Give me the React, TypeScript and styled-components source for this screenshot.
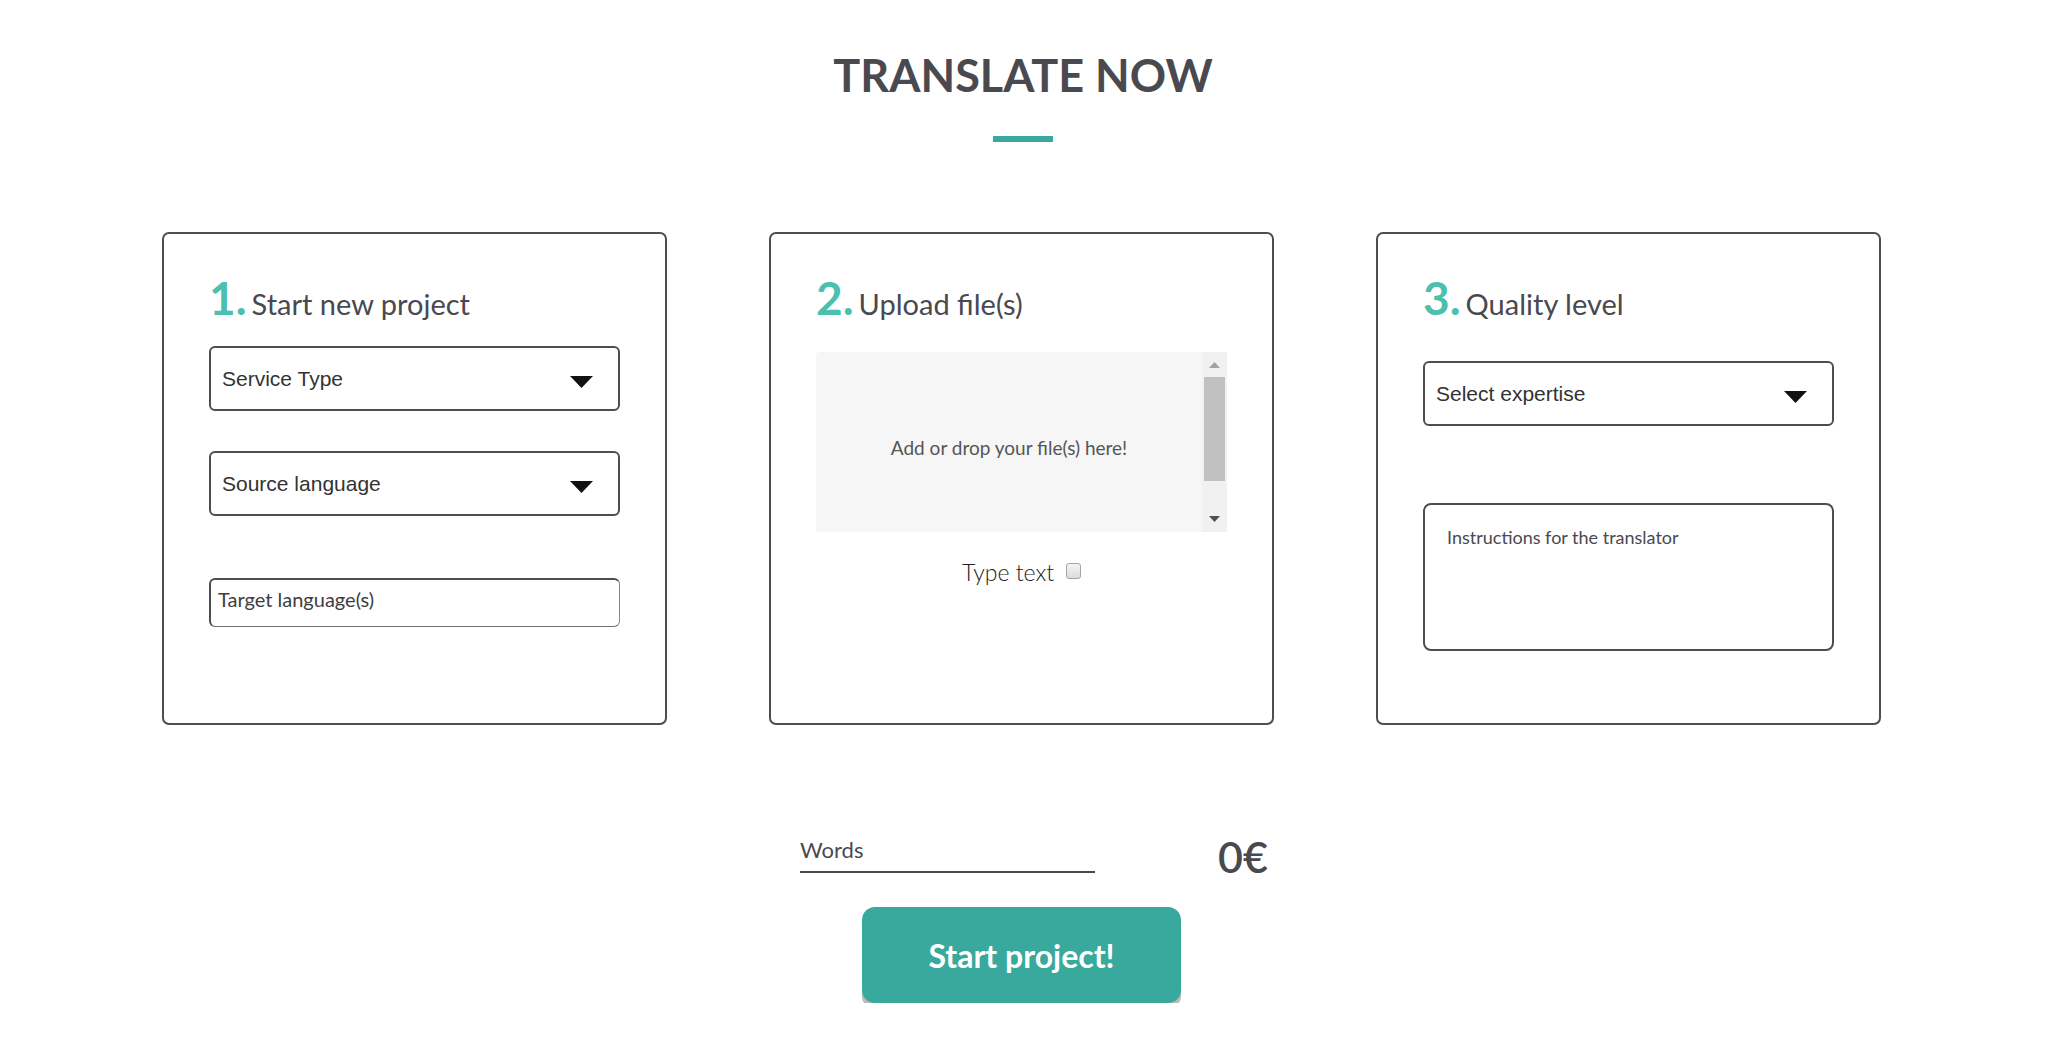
import styled, { createGlobalStyle } from 'styled-components';

const GlobalStyle = createGlobalStyle`
  html, body {
    margin: 0;
    padding: 0;
    background: #fff;
  }
  body {
    font-family: Lato, "Open Sans", sans-serif;
    color: #4a4950;
  }
`;

const Page = styled.main`
  display: flex;
  flex-direction: column;
  align-items: center;
  padding-top: 47px;
`;

const Title = styled.h1`
  margin: 0;
  font-family: Lato, sans-serif;
  font-weight: 700;
  font-size: 45px;
  line-height: 56px;
  color: #4a4950;
`;

const TitleBar = styled.div`
  width: 60px;
  height: 6px;
  margin-top: 33px;
  background: #38a99c;
`;

const Cards = styled.section`
  display: flex;
  gap: 102px;
  margin-top: 90px;
  padding-right: 3px;
`;

const Card = styled.div`
  width: 505px;
  height: 493px;
  box-sizing: border-box;
  border: 2px solid #4d4d52;
  border-radius: 7px;
  padding: 41px 45px 0;
  display: flex;
  flex-direction: column;
`;

const Heading = styled.h2`
  display: flex;
  align-items: baseline;
  margin: 0;
  font-weight: 400;
`;

const StepNumber = styled.span`
  font-size: 46px;
  line-height: 46px;
  font-weight: 700;
  color: #4bbfb0;
  margin-right: 5px;
`;

const StepTitle = styled.span`
  font-size: 29px;
  line-height: 30px;
  color: #4a4950;
`;

const Select = styled.div<{ $top: number }>`
  margin-top: ${(p) => p.$top}px;
  height: 65px;
  box-sizing: border-box;
  border: 2px solid #4d4d52;
  border-radius: 6px;
  display: flex;
  align-items: center;
  justify-content: space-between;
  padding: 0 25px 0 11px;
  font-family: "Liberation Sans", Arial, sans-serif;
  font-size: 21px;
  line-height: 24px;
  color: #333;
`;

const Caret = styled.svg`
  width: 23px;
  height: 12px;
  margin-top: 7px;
`;

const TargetField = styled.div`
  margin-top: 62px;
  height: 49px;
  box-sizing: border-box;
  border-top: 2px solid #4d4d52;
  border-left: 2px solid #4d4d52;
  border-right: 1px solid #8a8a8e;
  border-bottom: 1px solid #707075;
  border-radius: 6px;
  padding: 7px;
  font-size: 20px;
  line-height: 24px;
  color: #3d3d42;
`;

const DropZone = styled.div`
  margin-top: 31px;
  height: 180px;
  display: flex;
  background: #f6f6f6;
  border-top-left-radius: 4px;
`;

const DropArea = styled.div`
  flex: 1;
  display: flex;
  align-items: center;
  justify-content: center;
  padding-top: 11px;
  font-size: 19px;
  color: #555;
`;

const ScrollTrack = styled.div`
  width: 25px;
  box-sizing: border-box;
  background: #f1f1f1;
  display: flex;
  flex-direction: column;
  align-items: center;
  padding: 10px 2px;
`;

const ScrollThumb = styled.div`
  align-self: stretch;
  margin-top: 9px;
  height: 104px;
  background: #c1c1c1;
`;

const ScrollSpacer = styled.div`
  flex: 1;
`;

const ScrollArrow = styled.svg`
  width: 11px;
  height: 6px;
`;

const TypeRow = styled.label`
  margin-top: 26px;
  display: flex;
  justify-content: center;
  gap: 12px;
`;

const TypeLabel = styled.span`
  font-size: 23px;
  font-weight: 300;
  line-height: 28px;
  color: #222;
`;

const CheckBox = styled.input`
  appearance: none;
  width: 15px;
  height: 16px;
  margin: 5px 0 0;
  box-sizing: border-box;
  border: 1px solid #a4a4a4;
  border-radius: 3px;
  background: linear-gradient(#f4f4f4, #dcdcdc);
`;

const Instructions = styled.div`
  margin-top: 77px;
  height: 148px;
  box-sizing: border-box;
  border: 2px solid #4d4d52;
  border-radius: 8px;
  padding: 21px 22px;
  font-size: 18px;
  line-height: 22px;
  color: #4a4950;
`;

const TotalsRow = styled.div`
  display: flex;
  align-items: flex-end;
  gap: 123px;
  margin-top: 112px;
  padding-left: 22px;
`;

const WordsField = styled.div`
  width: 295px;
  padding-bottom: 8px;
  border-bottom: 2px solid #4a4950;
  font-size: 22px;
  line-height: 26px;
  color: #4a4950;
`;

const Price = styled.div`
  width: 50px;
  font-size: 43px;
  font-weight: 600;
  line-height: 32px;
  color: #4a4950;
  white-space: nowrap;
`;

const StartButton = styled.button`
  margin: 34px 3px 0 0;
  width: 319px;
  height: 96px;
  border: none;
  border-radius: 13px;
  background: #38a99c;
  box-shadow: 0 6px 0 #bababa;
  color: #fff;
  font-family: Lato, sans-serif;
  font-weight: 700;
  font-size: 32px;
  cursor: pointer;
`;

const CaretIcon = () => (
  <Caret viewBox="0 0 23 12">
    <path d="M0 0h23L11.5 12z" fill="#111" />
  </Caret>
);

export default function App() {
  return (
    <>
      <GlobalStyle />
      <Page>
        <Title>TRANSLATE NOW</Title>
        <TitleBar />
        <Cards>
          <Card>
            <Heading>
              <StepNumber>1.</StepNumber>
              <StepTitle>Start new project</StepTitle>
            </Heading>
            <Select $top={25}>
              Service Type
              <CaretIcon />
            </Select>
            <Select $top={40}>
              Source language
              <CaretIcon />
            </Select>
            <TargetField>Target language(s)</TargetField>
          </Card>
          <Card>
            <Heading>
              <StepNumber>2.</StepNumber>
              <StepTitle>Upload file(s)</StepTitle>
            </Heading>
            <DropZone>
              <DropArea>Add or drop your file(s) here!</DropArea>
              <ScrollTrack>
                <ScrollArrow viewBox="0 0 11 6">
                  <path d="M0 6L5.5 0 11 6z" fill="#a3a3a3" />
                </ScrollArrow>
                <ScrollThumb />
                <ScrollSpacer />
                <ScrollArrow viewBox="0 0 11 6">
                  <path d="M0 0h11L5.5 6z" fill="#505050" />
                </ScrollArrow>
              </ScrollTrack>
            </DropZone>
            <TypeRow>
              <TypeLabel>Type text</TypeLabel>
              <CheckBox type="checkbox" />
            </TypeRow>
          </Card>
          <Card>
            <Heading>
              <StepNumber>3.</StepNumber>
              <StepTitle>Quality level</StepTitle>
            </Heading>
            <Select $top={40}>
              Select expertise
              <CaretIcon />
            </Select>
            <Instructions>Instructions for the translator</Instructions>
          </Card>
        </Cards>
        <TotalsRow>
          <WordsField>Words</WordsField>
          <Price>0€</Price>
        </TotalsRow>
        <StartButton>Start project!</StartButton>
      </Page>
    </>
  );
}
